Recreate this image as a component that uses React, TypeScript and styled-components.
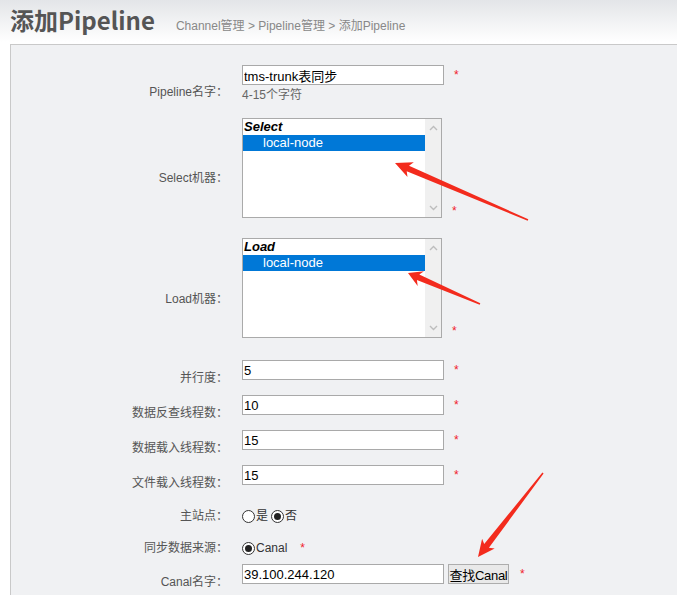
import styled, { createGlobalStyle } from 'styled-components';

const GlobalStyle = createGlobalStyle`
  html, body {
    margin: 0;
    padding: 0;
    background: #fff;
    overflow: hidden;
  }
  body {
    font-family: 'Liberation Sans', 'Noto Sans CJK SC', sans-serif;
  }
`;

const Page = styled.div`
  position: relative;
  width: 677px;
  height: 595px;
  overflow: hidden;
`;

const Header = styled.div`
  height: 44px;
  display: flex;
  align-items: baseline;
  padding-left: 10px;
  box-sizing: border-box;
  background: linear-gradient(to bottom, #e3e5e8 0%, #ffffff 42px);
`;

const Title = styled.h1`
  margin: 0;
  font-family: 'Noto Sans CJK SC', sans-serif;
  font-size: 24px;
  font-weight: bold;
  line-height: 40px;
  color: #555;
`;

const Crumbs = styled.div`
  margin-left: 21px;
  font-size: 12px;
  color: #888;
`;

const Panel = styled.div`
  margin-left: 10px;
  width: 720px;
  border: 1px solid #c9c9c9;
  background: #f0f1f3;
  padding-top: 20px;
  padding-bottom: 20px;
`;

const Row = styled.div<{ $h?: number }>`
  display: grid;
  grid-template-columns: 217px 1fr;
  column-gap: 14px;
  align-items: center;
  min-height: ${(p) => p.$h ?? 0}px;
`;

const Label = styled.div`
  text-align: right;
  font-size: 12px;
  line-height: 16px;
  color: #555;
`;

const Field = styled.div<{ $pad?: number }>`
  display: flex;
  align-items: center;
  padding-bottom: ${(p) => p.$pad ?? 0}px;
`;

const Stack = styled.div`
  display: flex;
  flex-direction: column;
`;

const Line = styled.div`
  display: flex;
  align-items: center;
`;

const TextInput = styled.input`
  width: 202px;
  height: 20px;
  box-sizing: border-box;
  margin: 0;
  padding: 0 1px;
  border: 1px solid #a9a9a9;
  background: #fff;
  font-family: 'Liberation Sans', 'Noto Sans CJK SC', sans-serif;
  font-size: 13px;
  color: #000;
  outline: none;
`;

const Hint = styled.div`
  margin-top: 2px;
  font-size: 12px;
  line-height: 16px;
  color: #666;
`;

const Star = styled.span<{ $gap?: number; $end?: boolean }>`
  margin-left: ${(p) => p.$gap ?? 10}px;
  font-size: 12px;
  line-height: 20px;
  color: #f0212b;
  align-self: ${(p) => (p.$end ? 'flex-end' : 'flex-start')};
  margin-bottom: ${(p) => (p.$end ? -3 : 0)}px;
`;

const ListBox = styled.div`
  width: 200px;
  height: 100px;
  box-sizing: border-box;
  border: 1px solid #aaa;
  background: #fff;
  display: flex;
`;

const ListItems = styled.div`
  flex: 1;
`;

const ListGroup = styled.div`
  font-size: 13px;
  font-weight: bold;
  font-style: italic;
  line-height: 16px;
  padding-left: 1px;
  color: #000;
`;

const ListOption = styled.div<{ $selected?: boolean }>`
  font-size: 13px;
  line-height: 16px;
  padding-left: 20px;
  color: ${(p) => (p.$selected ? '#fff' : '#000')};
  background: ${(p) => (p.$selected ? '#0078d7' : 'transparent')};
`;

const ScrollTrack = styled.div`
  width: 16px;
  background: #f0f0f0;
  display: flex;
  flex-direction: column;
  justify-content: space-between;
  align-items: center;
  padding: 6px 0;
`;

const Radio = styled.span<{ $checked?: boolean }>`
  position: relative;
  display: inline-block;
  width: 13px;
  height: 13px;
  box-sizing: border-box;
  border: 1px solid #333;
  border-radius: 50%;
  background: #fff;
  margin-right: 1px;
  &::after {
    content: '';
    display: ${(p) => (p.$checked ? 'block' : 'none')};
    position: absolute;
    left: 2px;
    top: 2px;
    width: 7px;
    height: 7px;
    border-radius: 50%;
    background: #222;
  }
`;

const RadioText = styled.span<{ $gap?: number }>`
  font-size: 12px;
  line-height: 16px;
  color: #333;
  margin-right: ${(p) => p.$gap ?? 0}px;
`;

const Button = styled.button`
  margin: 0 0 0 4px;
  width: 61px;
  height: 20px;
  padding: 0;
  box-sizing: border-box;
  border: 1px solid #adadad;
  background: #e9e9e9;
  font-family: 'Liberation Sans', 'Noto Sans CJK SC', sans-serif;
  font-size: 13px;
  letter-spacing: -0.3px;
  white-space: nowrap;
  overflow: hidden;
  color: #000;
`;

const Overlay = styled.svg`
  position: absolute;
  left: 0;
  top: 0;
  pointer-events: none;
`;

type Pt = [number, number];

function arrowPoints(tip: Pt, tail: Pt, head = 17, half = 8): string {
  const dx = tail[0] - tip[0];
  const dy = tail[1] - tip[1];
  const len = Math.hypot(dx, dy);
  const u: Pt = [dx / len, dy / len];
  const n: Pt = [-u[1], u[0]];
  const at = (a: number, b: number): Pt => [
    tip[0] + u[0] * a + n[0] * b,
    tip[1] + u[1] * a + n[1] * b,
  ];
  const pts: Pt[] = [
    tip,
    at(head, half),
    at(head - 3, 3),
    at(len, 0.8),
    at(len, -0.8),
    at(head - 3, -3),
    at(head, -half),
  ];
  return pts.map((p) => `${p[0].toFixed(1)},${p[1].toFixed(1)}`).join(' ');
}

const Chevron = ({ up }: { up?: boolean }) => (
  <svg width="9" height="6" viewBox="0 0 9 6">
    <polyline
      points={up ? '1,5 4.5,1.5 8,5' : '1,1 4.5,4.5 8,1'}
      fill="none"
      stroke="#bdbdbd"
      strokeWidth="1.4"
    />
  </svg>
);

const MachineList = ({ group }: { group: string }) => (
  <ListBox>
    <ListItems>
      <ListGroup>{group}</ListGroup>
      <ListOption $selected>local-node</ListOption>
    </ListItems>
    <ScrollTrack>
      <Chevron up />
      <Chevron />
    </ScrollTrack>
  </ListBox>
);

const threads = [
  { label: '并行度：', value: '5' },
  { label: '数据反查线程数：', value: '10' },
  { label: '数据载入线程数：', value: '15' },
  { label: '文件载入线程数：', value: '15' },
];

const arrows: { tip: Pt; tail: Pt; head?: number }[] = [
  { tip: [395, 163], tail: [528, 220] },
  { tip: [408, 273], tail: [480, 304], head: 14 },
  { tip: [478, 557], tail: [543, 473] },
];

export default function App() {
  return (
    <Page>
      <GlobalStyle />
      <Header>
        <Title>添加Pipeline</Title>
        <Crumbs>Channel管理 &gt; Pipeline管理 &gt; 添加Pipeline</Crumbs>
      </Header>
      <Panel>
        <Row>
          <Label>Pipeline名字：</Label>
          <Field $pad={15}>
            <Stack>
              <Line>
                <TextInput readOnly value="tms-trunk表同步" />
                <Star>*</Star>
              </Line>
              <Hint>4-15个字符</Hint>
            </Stack>
          </Field>
        </Row>
        <Row>
          <Label>Select机器：</Label>
          <Field $pad={20}>
            <MachineList group="Select" />
            <Star $end>*</Star>
          </Field>
        </Row>
        <Row>
          <Label>Load机器：</Label>
          <Field $pad={22}>
            <MachineList group="Load" />
            <Star $end>*</Star>
          </Field>
        </Row>
        {threads.map((t) => (
          <Row key={t.label}>
            <Label>{t.label}</Label>
            <Field $pad={15}>
              <TextInput readOnly value={t.value} />
              <Star>*</Star>
            </Field>
          </Row>
        ))}
        <Row $h={32}>
          <Label>主站点：</Label>
          <Field>
            <Radio />
            <RadioText $gap={3}>是</RadioText>
            <Radio $checked />
            <RadioText>否</RadioText>
          </Field>
        </Row>
        <Row $h={32}>
          <Label>同步数据来源：</Label>
          <Field>
            <Radio $checked />
            <RadioText>Canal</RadioText>
            <Star $gap={13}>*</Star>
          </Field>
        </Row>
        <Row>
          <Label>Canal名字：</Label>
          <Field $pad={15}>
            <TextInput readOnly value="39.100.244.120" />
            <Button>查找Canal</Button>
            <Star $gap={11}>*</Star>
          </Field>
        </Row>
      </Panel>
      <Overlay width="677" height="595" viewBox="0 0 677 595">
        {arrows.map((a, i) => (
          <polygon key={i} points={arrowPoints(a.tip, a.tail, a.head)} fill="#f32b1d" />
        ))}
      </Overlay>
    </Page>
  );
}
